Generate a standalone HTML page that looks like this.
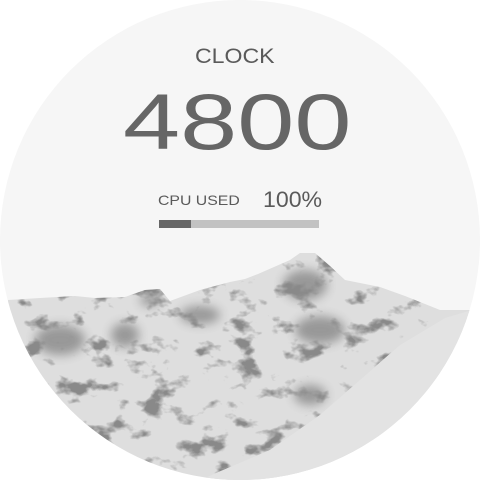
<!DOCTYPE html>
<html><head><style>
html,body{margin:0;padding:0;background:#fff;width:480px;height:480px;overflow:hidden}
.c{position:absolute;left:0;top:0;width:480px;height:480px;border-radius:50%;background:#f6f6f6;overflow:hidden}
.t{position:absolute;font-family:"Liberation Sans",sans-serif;color:#5a5a5a;white-space:nowrap;transform-origin:0 0}
</style></head><body>
<div class="c">
<svg width="480" height="480" style="position:absolute;left:0;top:0">
<defs>
<filter id="n" x="0" y="0" width="100%" height="100%">
<feTurbulence type="fractalNoise" baseFrequency="0.035 0.05" numOctaves="4" seed="7"/>
<feColorMatrix type="matrix" values="0 0 0 0 0.25  0 0 0 0 0.25  0 0 0 0 0.25  6 0 0 0 -3.3"/>
</filter>
<filter id="b"><feGaussianBlur stdDeviation="5"/></filter>
<clipPath id="m"><polygon points="8,300 40,298 75,296 95,298 125,297 145,290 160,289 170,301 200,290 230,282 245,279 258,274 290,260 300,253 315,253 330,266 345,280 380,287 405,296 440,310 472,310 445,318 400,345 360,380 320,415 270,450 200,480 0,480"/></clipPath>
</defs>
<polygon fill="#dedede" points="8,300 40,298 75,296 95,298 125,297 145,290 160,289 170,301 200,290 230,282 245,279 258,274 290,260 300,253 315,253 330,266 345,280 380,287 405,296 440,310 472,310 480,480 0,480"/>
<g clip-path="url(#m)">
<g filter="url(#b)" fill="#444" opacity="0.45">
<ellipse cx="60" cy="340" rx="25" ry="15"/>
<ellipse cx="125" cy="335" rx="14" ry="12"/>
<ellipse cx="200" cy="315" rx="20" ry="9"/>
<ellipse cx="305" cy="285" rx="22" ry="15"/>
<ellipse cx="320" cy="330" rx="25" ry="14"/>
<ellipse cx="310" cy="395" rx="16" ry="10"/>
<ellipse cx="150" cy="300" rx="10" ry="6"/>
</g>
<rect x="0" y="250" width="480" height="230" filter="url(#n)"/></g>
<polygon fill="#e3e3e3" points="472,310 445,318 400,345 360,380 320,415 270,450 200,480 480,480"/>
</svg>
<div class="t" style="left:195px;top:45px;font-size:21px;transform:scaleX(1.1)">CLOCK</div>
<div class="t" style="left:123px;top:76px;font-size:79px;color:#666;transform:scaleX(1.3)">4800</div>
<div class="t" style="top:192px;font-size:14px;left:158px;transform:scaleX(1.13)">CPU USED</div>
<div class="t" style="top:187px;font-size:22px;left:263px;transform:scaleX(1.05)">100%</div>
<div style="position:absolute;left:159px;top:220px;width:160px;height:8px;background:#c2c2c2"></div>
<div style="position:absolute;left:159px;top:220px;width:32px;height:8px;background:#666"></div>
</div>
</body></html>
